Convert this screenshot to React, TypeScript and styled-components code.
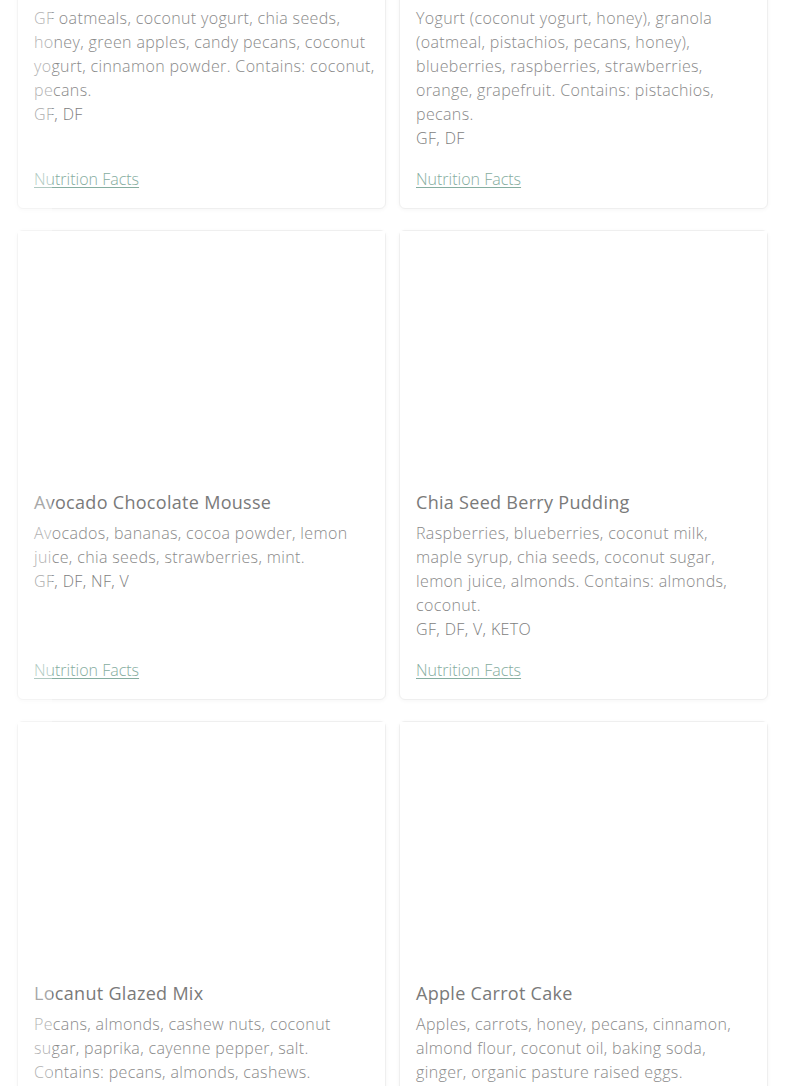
import React from "react";
import styled, {createGlobalStyle} from "styled-components";

const GlobalStyle = createGlobalStyle`
  html, body {
    margin: 0;
    padding: 0;
    background: #ffffff;
    overflow: hidden;
  }
  body {
    font-family: "Open Sans", "Liberation Sans", sans-serif;
    font-weight: 300;
  }
`

const Page = styled.div`
  height: 1086px;
  overflow: hidden;
  position: relative;
`

const Grid = styled.div`
  display: grid;
  grid-template-columns: 369px 369px;
  column-gap: 13px;
  row-gap: 21px;
  padding: 0 17px;
  margin-top: -285px;
`

const Card = styled.div`
  display: flex;
  flex-direction: column;
  background: #ffffff;
  border: 1px solid #efefef;
  border-radius: 6px;
  box-shadow: 0 1px 4px rgba(0, 0, 0, 0.04);
  padding: 0 10px 17px 16px;
`

const Picture = styled.div`
  height: 250px;
  margin: 0 -10px 0 -16px;
  background: #ffffff;
`

const Title = styled.h3`
  margin: 8px 0 6px;
  font-size: 18px;
  line-height: 26px;
  font-weight: 400;
  letter-spacing: 0.3px;
  color: #7a7a7a;
`

const Description = styled.p`
  margin: 0;
  font-size: 16px;
  line-height: 24px;
  letter-spacing: 0.36px;
  color: #8a8a8a;
`

const Tags = styled.div`
  font-size: 16px;
  line-height: 24px;
  letter-spacing: 0.36px;
  color: #7d7d7d;
  margin-bottom: 17px;
`

const Nutrition = styled.a`
  margin-top: auto;
  font-size: 16px;
  line-height: 24px;
  letter-spacing: 0;
  color: #86ada0;
  text-decoration: underline;
  text-underline-offset: 2px;
  cursor: pointer;
`

const EdgeFade = styled.div`
  position: absolute;
  left: 0;
  top: 0;
  bottom: 0;
  width: 52px;
  background: rgba(255, 255, 255, 0.35);
  pointer-events: none;
`

type Item = {
    title: string
    description: string
    tags: string
}

const items: Item[] = [
    {
        title: 'Apple Pie Overnight Oats',
        description: 'GF oatmeals, coconut yogurt, chia seeds, honey, green apples, candy pecans, coconut yogurt, cinnamon powder. Contains: coconut, pecans.',
        tags: 'GF, DF'
    },
    {
        title: 'Granola Yogurt Bowl',
        description: 'Yogurt (coconut yogurt, honey), granola (oatmeal, pistachios, pecans, honey), blueberries, raspberries, strawberries, orange, grapefruit. Contains: pistachios, pecans.',
        tags: 'GF, DF'
    },
    {
        title: 'Avocado Chocolate Mousse',
        description: 'Avocados, bananas, cocoa powder, lemon juice, chia seeds, strawberries, mint.',
        tags: 'GF, DF, NF, V'
    },
    {
        title: 'Chia Seed Berry Pudding',
        description: 'Raspberries, blueberries, coconut milk, maple syrup, chia seeds, coconut sugar, lemon juice, almonds. Contains: almonds, coconut.',
        tags: 'GF, DF, V, KETO'
    },
    {
        title: 'Locanut Glazed Mix',
        description: 'Pecans, almonds, cashew nuts, coconut sugar, paprika, cayenne pepper, salt. Contains: pecans, almonds, cashews.',
        tags: 'GF, DF, V'
    },
    {
        title: 'Apple Carrot Cake',
        description: 'Apples, carrots, honey, pecans, cinnamon, almond flour, coconut oil, baking soda, ginger, organic pasture raised eggs. Contains: pecans, almonds, eggs.',
        tags: 'GF, DF'
    },
]

function App() {
    return (
        <Page>
            <GlobalStyle/>
            <Grid>
                {items.map(item => {
                    return (
                        <Card key={item.title}>
                            <Picture/>
                            <Title>{item.title}</Title>
                            <Description>{item.description}</Description>
                            <Tags>{item.tags}</Tags>
                            <Nutrition>Nutrition Facts</Nutrition>
                        </Card>
                    )
                })}
            </Grid>
            <EdgeFade/>
        </Page>
    );
}

export default App
